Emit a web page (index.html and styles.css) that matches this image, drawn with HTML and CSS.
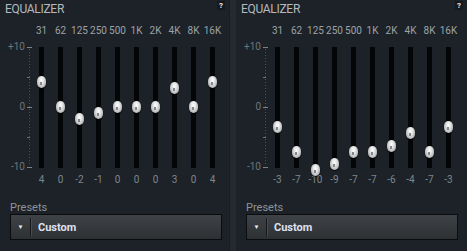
FILE: index.html
```html
<!DOCTYPE html>
<html lang="en">
<head>
    <meta charset="UTF-8">
    <title>Equalizer</title>
    <link rel="stylesheet" href="styles.css">
</head>
<body>
    <div class="eq-pair">
        <section class="panel">
            <header class="panel-head">
                <h2>EQUALIZER</h2>
                <span class="help">?</span>
            </header>
            <div class="eq">
                <div class="scale">
                    <span class="mark top">+10</span>
                    <span class="mark mid">0</span>
                    <span class="mark bottom">-10</span>
                    <span class="tick t1"></span>
                    <span class="tick t2"></span>
                </div>
                <div class="band"><span class="freq">31</span><div class="track"><span class="knob" style="top: 29px"></span></div><span class="gain">4</span></div>
                <div class="band"><span class="freq">62</span><div class="track"><span class="knob" style="top: 54px"></span></div><span class="gain">0</span></div>
                <div class="band"><span class="freq">125</span><div class="track"><span class="knob" style="top: 66px"></span></div><span class="gain">-2</span></div>
                <div class="band"><span class="freq">250</span><div class="track"><span class="knob" style="top: 60px"></span></div><span class="gain">-1</span></div>
                <div class="band"><span class="freq">500</span><div class="track"><span class="knob" style="top: 54px"></span></div><span class="gain">0</span></div>
                <div class="band"><span class="freq">1K</span><div class="track"><span class="knob" style="top: 54px"></span></div><span class="gain">0</span></div>
                <div class="band"><span class="freq">2K</span><div class="track"><span class="knob" style="top: 54px"></span></div><span class="gain">0</span></div>
                <div class="band"><span class="freq">4K</span><div class="track"><span class="knob" style="top: 35px"></span></div><span class="gain">3</span></div>
                <div class="band"><span class="freq">8K</span><div class="track"><span class="knob" style="top: 54px"></span></div><span class="gain">0</span></div>
                <div class="band"><span class="freq">16K</span><div class="track"><span class="knob" style="top: 29px"></span></div><span class="gain">4</span></div>
            </div>
            <div class="presets">
                <div class="presets-label">Presets</div>
                <div class="select">
                    <span class="select-arrow">&#9660;</span>
                    <span class="select-value">Custom</span>
                </div>
            </div>
        </section>

        <div class="divider"></div>

        <section class="panel">
            <header class="panel-head">
                <h2>EQUALIZER</h2>
                <span class="help">?</span>
            </header>
            <div class="eq">
                <div class="scale">
                    <span class="mark top">+10</span>
                    <span class="mark mid">0</span>
                    <span class="mark bottom">-10</span>
                    <span class="tick t1"></span>
                    <span class="tick t2"></span>
                </div>
                <div class="band"><span class="freq">31</span><div class="track"><span class="knob" style="top: 74px"></span></div><span class="gain">-3</span></div>
                <div class="band"><span class="freq">62</span><div class="track"><span class="knob" style="top: 99px"></span></div><span class="gain">-7</span></div>
                <div class="band"><span class="freq">125</span><div class="track"><span class="knob" style="top: 117px"></span></div><span class="gain">-10</span></div>
                <div class="band"><span class="freq">250</span><div class="track"><span class="knob" style="top: 111px"></span></div><span class="gain">-9</span></div>
                <div class="band"><span class="freq">500</span><div class="track"><span class="knob" style="top: 99px"></span></div><span class="gain">-7</span></div>
                <div class="band"><span class="freq">1K</span><div class="track"><span class="knob" style="top: 99px"></span></div><span class="gain">-7</span></div>
                <div class="band"><span class="freq">2K</span><div class="track"><span class="knob" style="top: 93px"></span></div><span class="gain">-6</span></div>
                <div class="band"><span class="freq">4K</span><div class="track"><span class="knob" style="top: 80px"></span></div><span class="gain">-4</span></div>
                <div class="band"><span class="freq">8K</span><div class="track"><span class="knob" style="top: 99px"></span></div><span class="gain">-7</span></div>
                <div class="band"><span class="freq">16K</span><div class="track"><span class="knob" style="top: 74px"></span></div><span class="gain">-3</span></div>
            </div>
            <div class="presets">
                <div class="presets-label">Presets</div>
                <div class="select">
                    <span class="select-arrow">&#9660;</span>
                    <span class="select-value">Custom</span>
                </div>
            </div>
        </section>
    </div>
</body>
</html>
```

FILE: styles.css
```css
html, body {
    margin: 0;
    padding: 0;
    background: #1c2228;
}
body {
    font-family: Roboto, 'Liberation Sans', sans-serif;
    width: 467px;
    height: 251px;
    overflow: hidden;
}
.eq-pair {
    display: flex;
    height: 251px;
}
.panel {
    width: 229px;
    background: #1c2228;
    box-sizing: border-box;
    padding: 0 0 0 5px;
}
.panel:last-child {
    width: 231px;
}
.divider {
    width: 7px;
    background: #252a2f;
    border-left: 1px solid #181d22;
    box-sizing: border-box;
}
.panel-head {
    display: flex;
    justify-content: space-between;
    align-items: flex-start;
    height: 25px;
}
.panel-head h2 {
    margin: 0;
    padding-top: 2px;
    font-size: 12px;
    font-weight: normal;
    line-height: 14px;
    color: #b4b9be;
    letter-spacing: -0.3px;
}
.help {
    margin: 1px 4px 0 0;
    width: 8px;
    height: 9px;
    font-size: 8px;
    font-weight: bold;
    line-height: 9px;
    text-align: center;
    color: #e8eaec;
    background: #15191d;
}

/* sliders */
.eq {
    display: flex;
}
.scale {
    position: relative;
    width: 27px;
    margin-top: 22px;
    height: 121px;
}
.scale::after {
    content: '';
    position: absolute;
    left: 24px;
    top: 2px;
    bottom: 2px;
    width: 1px;
    background: repeating-linear-gradient(to bottom, #4a5157 0 1px, transparent 1px 3px);
}
.mark {
    position: absolute;
    right: 7px;
    font-size: 10px;
    line-height: 10px;
    color: #6e757b;
}
.mark::after {
    content: '';
    position: absolute;
    right: -7px;
    top: 5px;
    width: 5px;
    height: 1px;
    background: #7b8288;
}
.mark.top { top: -5px; }
.mark.mid { top: 55px; }
.mark.bottom { top: 115px; }
.tick {
    position: absolute;
    left: 22px;
    width: 3px;
    height: 1px;
    background: #6a7177;
}
.tick.t1 { top: 30px; }
.tick.t2 { top: 90px; }
.band {
    width: 19px;
    display: flex;
    flex-direction: column;
    align-items: center;
}
.freq {
    height: 22px;
    font-size: 10px;
    line-height: 12px;
    color: #9ca2a7;
    white-space: nowrap;
}
.track {
    position: relative;
    width: 5px;
    height: 121px;
    background: #040506;
}
.knob {
    position: absolute;
    left: -2px;
    width: 9px;
    height: 12px;
    border-radius: 4.5px / 5px;
    background: radial-gradient(ellipse at 50% 35%, #ffffff 0%, #e2e2e2 35%, #b5b7b9 70%, #7e8183 100%);
    box-shadow: 0 1px 1px rgba(0, 0, 0, 0.7);
}
.knob::after {
    content: '';
    position: absolute;
    left: 3px;
    top: 6px;
    width: 2px;
    height: 3px;
    background: #85888b;
}
.gain {
    margin-top: 6px;
    font-size: 10px;
    line-height: 12px;
    color: #7f868c;
}

/* presets */
.presets {
    padding: 16px 0 0 5px;
}
.presets-label {
    font-size: 11px;
    line-height: 12px;
    color: #8d9398;
    margin-bottom: 0;
}
.select {
    display: flex;
    align-items: center;
    width: 212px;
    height: 26px;
    box-sizing: border-box;
    border: 1px solid #0a0c0e;
    background: linear-gradient(to bottom, #3f4246 0%, #2e3134 100%);
}
.select-arrow {
    width: 19px;
    height: 18px;
    font-size: 6px;
    line-height: 18px;
    text-align: center;
    color: #f0f0f0;
    border-right: 1px solid #141618;
    box-shadow: 1px 0 0 #4a4d51;
}
.select-value {
    padding-left: 7px;
    font-size: 11px;
    font-weight: bold;
    color: #dde1f3;
}
```
